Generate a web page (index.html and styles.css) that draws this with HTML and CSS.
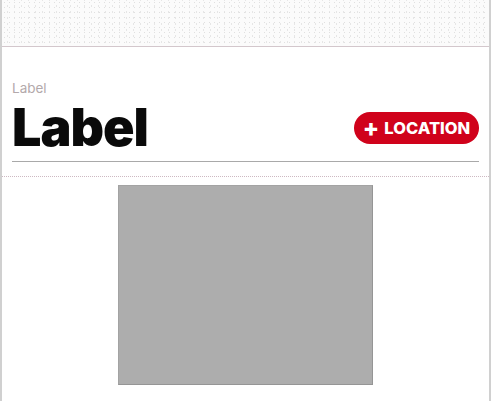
FILE: index.html
```html
<!DOCTYPE html>
<html>
<head>
<meta charset="utf-8">
<link rel="stylesheet" href="styles.css">
</head>
<body>
<div class="frame">
  <div class="topband"></div>
  <div class="card">
    <div class="eyebrow">Label</div>
    <div class="row">
      <div class="title">Label</div>
      <button class="pill"><span class="plus">+</span> LOCATION</button>
    </div>
    <div class="rule"></div>
  </div>
  <div class="media"><div class="placeholder"></div></div>
</div>
</body>
</html>
```
FILE: styles.css
```css
html, body {
  margin: 0;
  padding: 0;
  background: #ffffff;
}
.frame {
  width: 491px;
  height: 401px;
  box-sizing: border-box;
  border-left: 2px solid #d0d0d0;
  border-right: 2px solid #d0d0d0;
  font-family: Inter, "Liberation Sans", sans-serif;
}
.topband {
  height: 46px;
  background-color: #fbfbfb;
  background-image:
    radial-gradient(circle, #e0e0e0 0.6px, transparent 0.8px),
    radial-gradient(circle, #e6e6e6 0.6px, transparent 0.8px);
  background-size: 5px 5px, 7px 6px;
  background-position: 0 0, 2px 3px;
}
.card {
  border-top: 1px solid #d3c7cc;
  border-bottom: 1px dotted #cdb9c2;
  padding: 33px 10px 14px 10px;
  background: #ffffff;
}
.eyebrow {
  font-size: 13.5px;
  line-height: 16px;
  color: #b3a9ab;
}
.row {
  display: flex;
  align-items: center;
  justify-content: space-between;
  margin-top: 4px;
  height: 56px;
}
.title {
  font-size: 52px;
  line-height: 56px;
  font-weight: 900;
  color: #0a0a0a;
  letter-spacing: -1px;
}
.pill {
  height: 32px;
  width: 125px;
  border: none;
  border-radius: 16px;
  background: #d0021b;
  color: #ffffff;
  font-family: Inter, "Liberation Sans", sans-serif;
  font-weight: 800;
  font-size: 16.5px;
  padding: 0;
  display: flex;
  align-items: center;
  justify-content: center;
}
.plus {
  font-size: 24px;
  font-weight: 800;
  margin-right: 5px;
  line-height: 1;
}
.rule {
  margin-top: 5px;
  height: 1px;
  background: #a9a9a9;
}
.media {
  display: flex;
  justify-content: center;
  padding-top: 8px;
}
.placeholder {
  width: 255px;
  height: 200px;
  box-sizing: border-box;
  background: #adadad;
  border: 1px solid #959595;
  border-top-color: #a3a3a3;
  border-left-color: #a3a3a3;
}
```
